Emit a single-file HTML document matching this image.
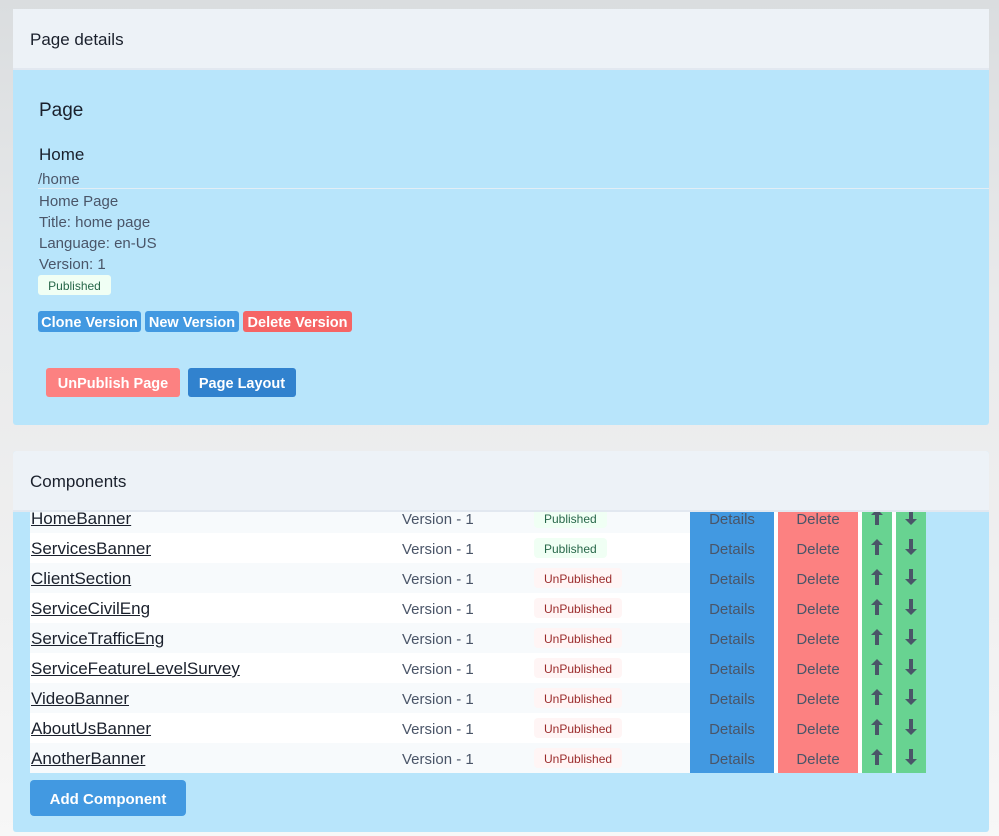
<!DOCTYPE html>
<html><head><style>
*{margin:0;padding:0;box-sizing:border-box}
body{width:999px;height:836px;overflow:hidden;position:relative;font-family:"Liberation Sans",sans-serif;background:linear-gradient(180deg,#dadddf 0px,#e9eaeb 300px,#f0f0f0 600px,#f7f7f7 836px)}
.a{position:absolute;white-space:nowrap}
.card{position:absolute;left:13px;width:976px;background:#b8e5fb;border-radius:3px}
.hd{position:absolute;left:0;right:0;top:0;height:61px;background:#edf2f7;border-bottom:2px solid #e2e8f0;font-size:17px;color:#1a202c;padding:21px 0 0 17px;z-index:2}
.g{color:#4a5568;font-size:15px}
.btn{position:absolute;color:#fff;font-weight:bold;font-size:14.5px;border-radius:3px;text-align:center}
.row{position:absolute;left:30px;width:660px;height:30px;z-index:1}
.nm{position:absolute;left:1px;top:6px;font-size:17px;color:#1a202c;text-decoration:underline}
.ver{position:absolute;left:372px;top:8px;font-size:15px;color:#4a5568}
.bd{position:absolute;left:504px;top:5px;height:20px;font-size:12px;border-radius:4px;padding:4px 10px 0}
.pub{background:#f0fff4;color:#276749}
.un{background:#fff5f5;color:#9b2c2c}
.c{position:absolute;height:30px;font-size:15px;color:#4a5568;text-align:center;padding-top:8px;z-index:1}
.c svg{display:block;margin:-1px auto 0}
</style></head><body>
<div class="card" style="top:9px;height:416px">
 <div class="hd">Page details</div>
</div>
<div class="a" style="left:39px;top:100px;font-size:19px;color:#1a202c">Page</div>
<div class="a" style="left:39px;top:145px;font-size:17px;color:#1a202c">Home</div>
<div class="a g" style="left:38px;top:171px">/home</div>
<div class="a" style="left:38px;top:188px;width:951px;height:1px;background:#e2eef6"></div>
<div class="a g" style="left:39px;top:193px">Home Page</div>
<div class="a g" style="left:39px;top:214px">Title: home page</div>
<div class="a g" style="left:39px;top:235px">Language: en-US</div>
<div class="a g" style="left:39px;top:256px">Version: 1</div>
<div class="a" style="left:38px;top:275px;width:73px;height:20px;background:#f0fff4;color:#276749;font-size:12px;border-radius:3px;text-align:center;padding-top:4px">Published</div>
<div class="btn" style="left:38px;top:311px;width:103px;height:21px;background:#4299e1;padding-top:4px">Clone Version</div>
<div class="btn" style="left:145px;top:311px;width:94px;height:21px;background:#4299e1;padding-top:4px">New Version</div>
<div class="btn" style="left:243px;top:311px;width:109px;height:21px;background:#f56565;padding-top:4px">Delete Version</div>
<div class="btn" style="left:46px;top:368px;width:134px;height:29px;background:#fc8181;padding-top:8px">UnPublish Page</div>
<div class="btn" style="left:188px;top:368px;width:108px;height:29px;background:#3182ce;padding-top:8px">Page Layout</div>

<div class="card" style="top:451px;height:381px"></div>
<div id="rows"></div>
<div class="btn" style="left:30px;top:780px;width:156px;height:36px;background:#4299e1;font-size:15px;padding-top:11px;border-radius:4px">Add Component</div>
<script>
var d=[["HomeBanner",1],["ServicesBanner",1],["ClientSection",0],["ServiceCivilEng",0],["ServiceTrafficEng",0],["ServiceFeatureLevelSurvey",0],["VideoBanner",0],["AboutUsBanner",0],["AnotherBanner",0]];
var up='<svg width="12" height="16" viewBox="0 0 12 16"><path d="M6 0 L12 6 H8 V16 H4 V6 H0 Z" fill="#4a5568"/></svg>';
var dn='<svg width="12" height="16" viewBox="0 0 12 16"><path d="M6 16 L12 10 H8 V0 H4 V10 H0 Z" fill="#4a5568"/></svg>';
var h="";
d.forEach(function(r,i){var y=503+i*30;
h+='<div class="row" style="top:'+y+'px;background:'+(i%2?'#fff':'#f7fafc')+'"><span class="nm">'+r[0]+'</span><span class="ver">Version - 1</span><span class="bd '+(r[1]?'pub':'un')+'">'+(r[1]?'Published':'UnPublished')+'</span></div>';
h+='<div class="a" style="left:690px;top:'+y+'px;width:236px;height:30px;background:#fff;z-index:1"></div>';
h+='<div class="c" style="left:690px;top:'+y+'px;width:84px;background:#4299e1">Details</div>';
h+='<div class="c" style="left:778px;top:'+y+'px;width:80px;background:#fc8181">Delete</div>';
h+='<div class="c" style="left:862px;top:'+y+'px;width:30px;background:#68d391;padding-top:7px">'+up+'</div>';
h+='<div class="c" style="left:896px;top:'+y+'px;width:30px;background:#68d391;padding-top:7px">'+dn+'</div>';
});
document.getElementById("rows").innerHTML=h;
</script>
<div class="a" style="left:13px;top:451px;width:976px;height:61px;background:#edf2f7;border-bottom:2px solid #e2e8f0;font-size:17px;color:#1a202c;padding:21px 0 0 17px;z-index:10;border-radius:3px 3px 0 0">Components</div>
</body></html>
